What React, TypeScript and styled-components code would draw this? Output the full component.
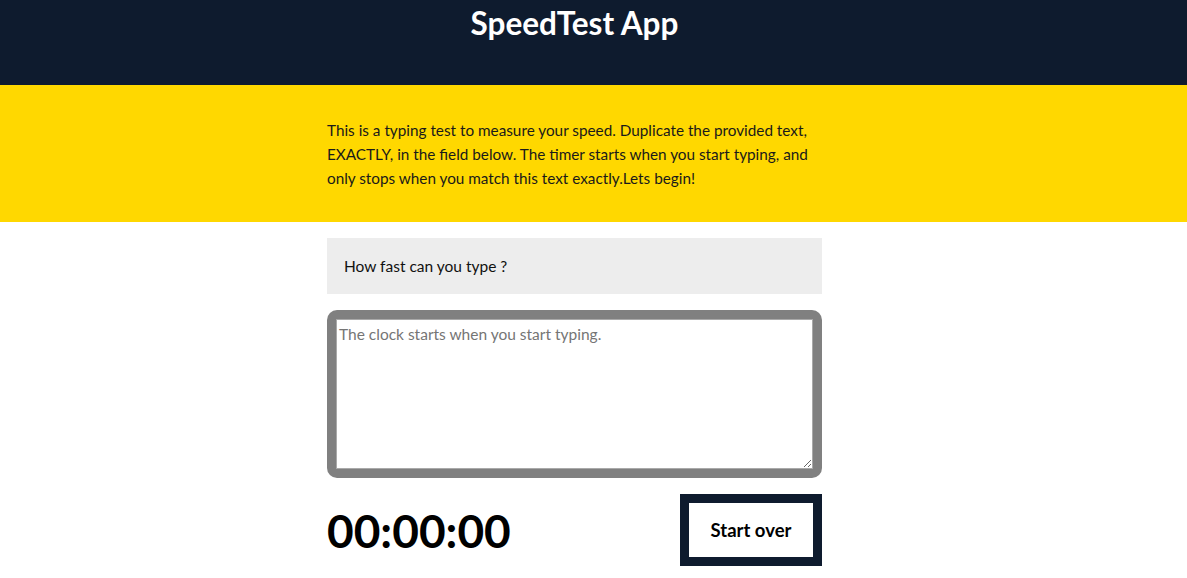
import React, { useState } from 'react';
import styled, { createGlobalStyle } from 'styled-components';

const GlobalStyle = createGlobalStyle`
  html, body {
    margin: 0;
    padding: 0;
    background: #ffffff;
    font-family: Lato, "Source Sans Pro", "Liberation Sans", sans-serif;
    color: #111111;
  }
`;

const Header = styled.header`
  height: 85px;
  background: #0e1b2e;
  padding-right: 38px;
  box-sizing: border-box;
`;

const Title = styled.h1`
  margin: 0;
  padding-top: 3px;
  text-align: center;
  color: #ffffff;
  font-size: 31.5px;
  line-height: 40px;
  font-weight: 700;
`;

const Intro = styled.section`
  background: #ffd800;
  padding: 33px 38px 32px 0;
`;

const Column = styled.div`
  width: 495px;
  margin: 0 auto;
`;

const IntroText = styled.p`
  margin: 0;
  font-size: 15.3px;
  line-height: 24px;
  color: #1a1a1a;
`;

const Main = styled.main`
  padding-right: 38px;
`;

const Prompt = styled.div`
  margin-top: 16px;
  height: 56px;
  padding: 0 17px;
  background: #ededed;
  font-size: 15.5px;
  line-height: 56px;
  color: #111111;
`;

const Frame = styled.div`
  margin-top: 16px;
  padding: 9px;
  background: #808080;
  border-radius: 10px;
`;

const Input = styled.textarea`
  display: block;
  width: 100%;
  height: 150px;
  box-sizing: border-box;
  margin: 0;
  padding: 4px 2px;
  border: 1px solid #a9a9a9;
  font-family: inherit;
  font-size: 15.5px;
  line-height: 20px;
  outline: none;

  &::placeholder {
    color: #757575;
  }
`;

const Meta = styled.div`
  margin-top: 16px;
  display: flex;
  align-items: center;
  justify-content: space-between;
`;

const Timer = styled.div`
  font-size: 46px;
  font-weight: 700;
  color: #000000;
`;

const ResetButton = styled.button`
  width: 142px;
  height: 72px;
  box-sizing: border-box;
  border: 9px solid #0e1b2e;
  background: #ffffff;
  font-family: inherit;
  font-size: 18.5px;
  font-weight: 700;
  color: #000000;
  cursor: pointer;
`;

function App() {
  const [text, setText] = useState('');

  return (
    <>
      <GlobalStyle />
      <Header>
        <Title>SpeedTest App</Title>
      </Header>
      <Intro>
        <Column>
          <IntroText>
            This is a typing test to measure your speed. Duplicate the provided text, EXACTLY, in the field below. The timer starts when you start typing, and only stops when you match this text exactly.Lets begin!
          </IntroText>
        </Column>
      </Intro>
      <Main>
        <Column>
          <Prompt>How fast can you type ?</Prompt>
          <Frame>
            <Input
              value={text}
              onChange={e => setText(e.target.value)}
              placeholder="The clock starts when you start typing."
            />
          </Frame>
          <Meta>
            <Timer>00:00:00</Timer>
            <ResetButton onClick={() => setText('')}>Start over</ResetButton>
          </Meta>
        </Column>
      </Main>
    </>
  );
}

export default App;
